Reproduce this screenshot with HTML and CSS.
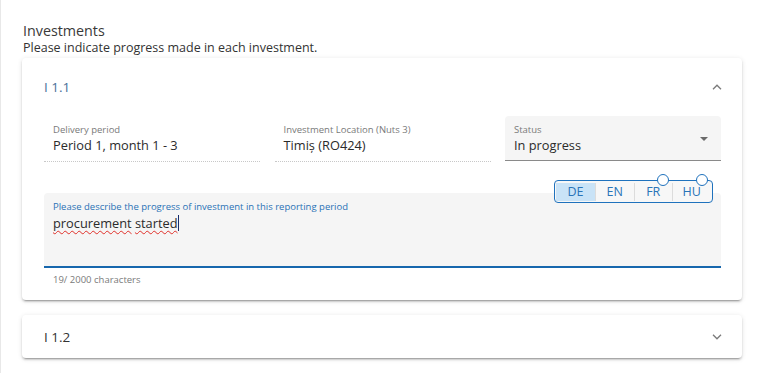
FILE: index.html
```html
<!DOCTYPE html>
<html lang="en">
<head>
    <meta charset="UTF-8">
    <title>Investments</title>
    <link rel="stylesheet" href="styles.css">
</head>
<body>
    <div class="page">
        <h2 class="section-title">Investments</h2>
        <p class="section-sub">Please indicate progress made in each investment.</p>

        <div class="panel expanded">
            <div class="panel-header">
                <span class="panel-title">I 1.1</span>
                <svg class="chevron" width="10" height="6" viewBox="0 0 10 6"><path d="M1 5.2 L5 1.2 L9 5.2" fill="none" stroke="#7a7a7a" stroke-width="1.3"/></svg>
            </div>
            <div class="panel-body">
                <div class="fields">
                    <div class="field readonly">
                        <label>Delivery period</label>
                        <div class="value">Period 1, month 1 - 3</div>
                    </div>
                    <div class="field readonly">
                        <label>Investment Location (Nuts 3)</label>
                        <div class="value">Timiș (RO424)</div>
                    </div>
                    <div class="field select">
                        <label>Status</label>
                        <div class="value">In progress</div>
                        <span class="select-arrow"></span>
                    </div>
                </div>

                <div class="text-block">
                    <div class="lang-toggle">
                        <button class="active">DE</button>
                        <button>EN</button>
                        <button class="dot">FR</button>
                        <button class="dot">HU</button>
                    </div>
                    <div class="textarea-field">
                        <label>Please describe the progress of investment in this reporting period</label>
                        <div class="text"><span class="misspelled">procurement</span> <span class="misspelled">started</span><span class="caret"></span></div>
                    </div>
                    <div class="hint">19/ 2000 characters</div>
                </div>
            </div>
        </div>

        <div class="panel">
            <div class="panel-header collapsed">
                <span class="panel-title dark">I 1.2</span>
                <svg class="chevron" width="10" height="6" viewBox="0 0 10 6"><path d="M1 0.8 L5 4.8 L9 0.8" fill="none" stroke="#7a7a7a" stroke-width="1.3"/></svg>
            </div>
        </div>
    </div>
</body>
</html>
```

FILE: styles.css
```css
* {
    margin: 0;
    padding: 0;
    box-sizing: border-box;
}

body {
    background: #fff;
    font-family: 'Open Sans', 'Segoe UI', sans-serif;
    color: #333;
}

.page {
    border-left: 1px solid #e8e8e8;
    min-height: 373px;
    padding: 22px 18px 0 21px;
}

.section-title {
    font-size: 14.3px;
    font-weight: normal;
    line-height: 18px;
    padding-left: 1px;
    color: #3a3a3a;
}

.section-sub {
    font-size: 12.5px;
    line-height: 16px;
    padding-left: 1px;
    margin-bottom: 2px;
    color: #333;
}

.panel {
    background: #fff;
    border-radius: 4px;
    box-shadow: 0 3px 1px -2px rgba(0, 0, 0, 0.2), 0 2px 2px 0 rgba(0, 0, 0, 0.14), 0 1px 5px 0 rgba(0, 0, 0, 0.12);
    margin-bottom: 15px;
}

.panel-header {
    height: 58px;
    display: flex;
    align-items: center;
    justify-content: space-between;
    padding: 0 20px 0 22px;
}

.panel-header.collapsed {
    height: 43px;
}

.panel-title {
    font-size: 13.5px;
    color: #4a7199;
}

.panel-title.dark {
    color: #333;
}

.panel-body {
    padding: 0 21px 14px 22px;
}

.fields {
    display: grid;
    grid-template-columns: repeat(3, 1fr);
    column-gap: 14.5px;
}

.field {
    position: relative;
    height: 46px;
    padding: 8px 9px 0;
}

.field label {
    display: block;
    font-size: 9.5px;
    line-height: 12px;
    color: #7a7a7a;
}

.field .value {
    font-size: 12.8px;
    line-height: 18px;
    color: #2b2b2b;
}

.field.readonly {
    border-bottom: 1px dotted #c8c8c8;
}

.field.select {
    background: #f5f5f5;
    border-radius: 4px 4px 0 0;
    border-bottom: 1px solid #8a8a8a;
    height: 45px;
}

.select-arrow {
    position: absolute;
    right: 13px;
    top: 21px;
    border-left: 4px solid transparent;
    border-right: 4px solid transparent;
    border-top: 4px solid #6a6a6a;
}

.text-block {
    position: relative;
    margin-top: 31px;
}

.lang-toggle {
    position: absolute;
    top: -13px;
    right: 8px;
    display: flex;
    border: 1.5px solid #1f72bd;
    border-radius: 4px;
    padding: 1.5px;
    background: #f7f7f7;
    z-index: 2;
}

.lang-toggle button {
    position: relative;
    font-family: inherit;
    font-size: 12.5px;
    line-height: 17px;
    height: 18px;
    color: #2a74b8;
    background: transparent;
    border: none;
    border-left: 1px solid #dcdcdc;
    width: 38.5px;
}

.lang-toggle button:first-child {
    border-left: none;
    width: 39px;
}

.lang-toggle button.active {
    background: #c9e3f7;
}

.lang-toggle button.dot::after {
    content: '';
    position: absolute;
    right: 3px;
    top: -9px;
    width: 10px;
    height: 10px;
    border-radius: 50%;
    border: 1.3px solid #1f72bd;
    background: #fff;
}

.textarea-field {
    background: #f5f5f5;
    border-radius: 4px 4px 0 0;
    border-bottom: 2px solid #1767ad;
    height: 75px;
    padding: 8px 9px 0;
}

.textarea-field label {
    display: block;
    font-size: 9.5px;
    line-height: 12px;
    color: #2a72b5;
}

.textarea-field .text {
    font-size: 12.8px;
    line-height: 20px;
    color: #2b2b2b;
}

.misspelled {
    text-decoration: underline wavy #e0302a;
    text-decoration-thickness: 1.2px;
    text-underline-offset: 2px;
    text-decoration-skip-ink: none;
}

.caret {
    display: inline-block;
    width: 1px;
    height: 16px;
    background: #1a2d6b;
    vertical-align: -3px;
}

.hint {
    font-size: 9.5px;
    line-height: 12px;
    color: #7a7a7a;
    padding: 6px 9px 0;
}
```
